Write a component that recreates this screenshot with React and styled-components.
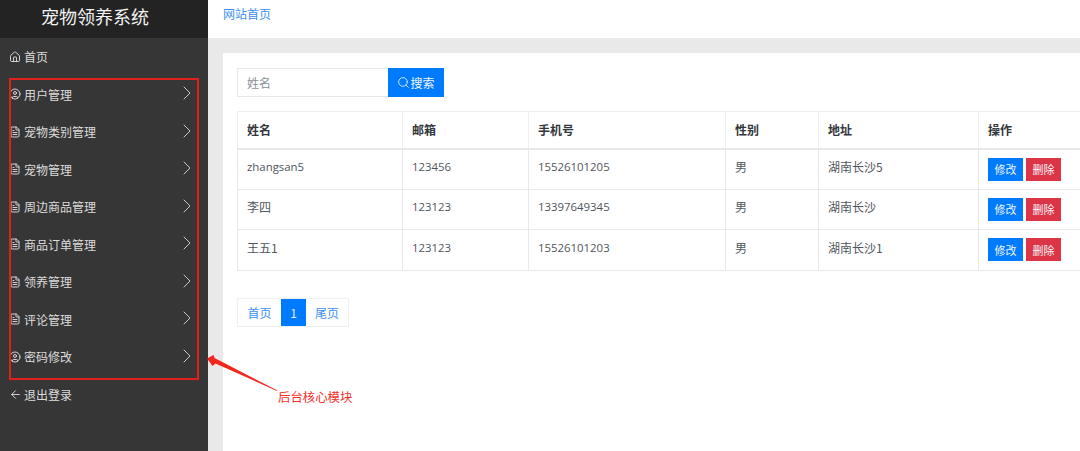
import React from 'react';
import styled, { createGlobalStyle } from 'styled-components';
import {
  House,
  CircleUser,
  FileText,
  ChevronRight,
  ArrowLeft,
  Search,
} from 'lucide-react';

const MENU = [
  { label: '用户管理', Icon: CircleUser },
  { label: '宠物类别管理', Icon: FileText },
  { label: '宠物管理', Icon: FileText },
  { label: '周边商品管理', Icon: FileText },
  { label: '商品订单管理', Icon: FileText },
  { label: '领养管理', Icon: FileText },
  { label: '评论管理', Icon: FileText },
  { label: '密码修改', Icon: CircleUser },
];

const COLUMNS = [
  { title: '姓名', width: 165 },
  { title: '邮箱', width: 126 },
  { title: '手机号', width: 197 },
  { title: '性别', width: 93 },
  { title: '地址', width: 160 },
  { title: '操作', width: 130 },
];

const ROWS = [
  { name: 'zhangsan5', email: '123456', phone: '15526101205', sex: '男', address: '湖南长沙5' },
  { name: '李四', email: '123123', phone: '13397649345', sex: '男', address: '湖南长沙' },
  { name: '王五1', email: '123123', phone: '15526101203', sex: '男', address: '湖南长沙1' },
];

const isLatin = text => /^[a-z0-9]+$/i.test(text);

export default function App() {
  return (
    <Page>
      <GlobalStyle />
      <Sidebar>
        <Brand>宠物领养系统</Brand>
        <Nav>
          <NavItem>
            <NavIcon><House size={12} strokeWidth={1.9} /></NavIcon>
            首页
          </NavItem>
          {MENU.map(({ label, Icon }) => (
            <NavItem key={label}>
              <NavIcon><Icon size={12} strokeWidth={1.9} /></NavIcon>
              {label}
              <Chevron><ChevronRight size={24} strokeWidth={1} /></Chevron>
            </NavItem>
          ))}
          <NavItem>
            <NavIcon><ArrowLeft size={13} strokeWidth={1.7} /></NavIcon>
            退出登录
          </NavItem>
        </Nav>
      </Sidebar>

      <Main>
        <TopBar>
          <TopLink>网站首页</TopLink>
        </TopBar>
        <Card>
          <SearchRow>
            <SearchInput placeholder="姓名" />
            <SearchButton>
              <Search size={13} strokeWidth={1.5} />
              搜索
            </SearchButton>
          </SearchRow>

          <Table>
            <colgroup>
              {COLUMNS.map(col => (
                <col key={col.title} width={col.width} />
              ))}
            </colgroup>
            <thead>
              <tr>
                {COLUMNS.map(col => (
                  <Th key={col.title}>{col.title}</Th>
                ))}
              </tr>
            </thead>
            <tbody>
              {ROWS.map(row => (
                <tr key={row.phone}>
                  <Td latin={isLatin(row.name)}>{row.name}</Td>
                  <Td latin>{row.email}</Td>
                  <Td latin>{row.phone}</Td>
                  <Td>{row.sex}</Td>
                  <Td>{row.address}</Td>
                  <ActionCell>
                    <ActionButton>修改</ActionButton>
                    <ActionButton danger>删除</ActionButton>
                  </ActionCell>
                </tr>
              ))}
            </tbody>
          </Table>

          <Pagination>
            <PageLink>首页</PageLink>
            <PageLink active>1</PageLink>
            <PageLink last>尾页</PageLink>
          </Pagination>
        </Card>
      </Main>

      <RedBox />
      <Arrow width="80" height="44" viewBox="0 0 80 44">
        <path d="M0 3.5 L6.5 0 L7.5 3 L70.5 35.5 L70 36 L8.5 8.5 L5.5 11 Z" fill="#f5241c" />
      </Arrow>
      <Note>后台核心模块</Note>
    </Page>
  );
}

const GlobalStyle = createGlobalStyle`
  html, body {
    margin: 0;
    padding: 0;
    overflow: hidden;
  }

  body {
    font-family: 'Noto Sans CJK SC', 'Noto Sans', sans-serif;
    font-size: 13px;
    color: #495057;
  }

  * {
    box-sizing: border-box;
  }
`;

const Page = styled.div`
  position: relative;
  display: flex;
  width: 1080px;
  height: 451px;
  overflow: hidden;
`;

const Sidebar = styled.aside`
  flex: 0 0 208px;
  display: flex;
  flex-direction: column;
  background-color: #363636;
`;

const Brand = styled.div`
  height: 38px;
  padding: 0 18px 6px 0;
  display: flex;
  align-items: center;
  justify-content: center;
  background-color: #232323;
  color: #f2f2f2;
  font-size: 18px;
`;

const Nav = styled.nav`
  display: flex;
  flex-direction: column;
`;

const NavItem = styled.div`
  height: 37.5px;
  padding: 0 9px;
  display: flex;
  align-items: center;
  color: #dcdcdc;
  font-size: 12px;
`;

const NavIcon = styled.span`
  width: 15px;
  display: flex;
  align-items: center;
`;

const Chevron = styled.span`
  margin: -2px 0 0 auto;
  display: flex;
  color: #c8c8c8;
`;

const Main = styled.main`
  flex: 1;
  min-width: 0;
  display: flex;
  flex-direction: column;
  background-color: #e9e9e9;
`;

const TopBar = styled.div`
  height: 38px;
  padding: 0 15px 12px;
  display: flex;
  align-items: center;
  background-color: #fff;
`;

const TopLink = styled.a`
  color: #3d8ff5;
  font-size: 12px;
`;

const Card = styled.section`
  flex: 1;
  margin: 15px 0 0 15px;
  padding: 15px 14px;
  background-color: #fff;
  overflow: hidden;
`;

const SearchRow = styled.div`
  display: flex;
  height: 29px;
`;

const SearchInput = styled.input`
  width: 151px;
  height: 100%;
  padding: 0 9px;
  border: 1px solid #e6e8eb;
  border-right: 0;
  outline: none;
  font-family: inherit;
  font-size: 12px;

  &::placeholder {
    color: #8a9097;
  }
`;

const SearchButton = styled.button`
  width: 56px;
  height: 100%;
  padding: 0;
  display: flex;
  align-items: center;
  justify-content: center;
  border: 0;
  background-color: #007bff;
  color: #f4f8ff;
  font-family: inherit;
  font-size: 12px;
`;

const Table = styled.table`
  margin-top: 14px;
  width: 871px;
  table-layout: fixed;
  border-collapse: collapse;
`;

const Th = styled.th`
  height: 37px;
  padding: 0 9px;
  border: 1px solid #eceef0;
  border-bottom-width: 2px;
  border-bottom-color: #e6e8eb;
  color: #33373b;
  font-size: 12px;
  font-weight: 700;
  text-align: left;
`;

const Td = styled.td`
  height: 40.6px;
  padding: 0 9px 5px;
  border: 1px solid #e8eaec;
  color: #50565c;
  font-family: ${({ latin }) => (latin ? "'Open Sans', sans-serif" : 'inherit')};
  font-size: ${({ latin }) => (latin ? 11.4 : 12)}px;
`;

const ActionCell = styled(Td)`
  padding: 0 9px;
`;

const ActionButton = styled.button`
  width: 35px;
  height: 23px;
  padding: 0;
  margin-right: 3px;
  border: 0;
  vertical-align: middle;
  background-color: ${({ danger }) => (danger ? '#dc3545' : '#007bff')};
  color: #f2f6fb;
  font-family: inherit;
  font-size: 11px;
`;

const Pagination = styled.div`
  display: inline-flex;
  margin-top: 27px;
  height: 29px;
  border: 1px solid #eff0f2;
`;

const PageLink = styled.span`
  width: ${({ active, last }) => (active ? 25 : last ? 42 : 43)}px;
  display: flex;
  align-items: center;
  justify-content: center;
  background-color: ${({ active }) => (active ? '#007bff' : 'transparent')};
  color: ${({ active }) => (active ? '#e6f1ff' : '#3d8ff5')};
  font-size: 12px;
`;

const RedBox = styled.div`
  position: absolute;
  left: 9px;
  top: 78px;
  width: 190px;
  height: 302px;
  border: 2px solid #e0201a;
`;

const Arrow = styled.svg`
  position: absolute;
  left: 207px;
  top: 355px;
`;

const Note = styled.div`
  position: absolute;
  left: 278px;
  top: 388px;
  color: #f5302a;
  font-size: 12.4px;
  line-height: 18px;
`;
